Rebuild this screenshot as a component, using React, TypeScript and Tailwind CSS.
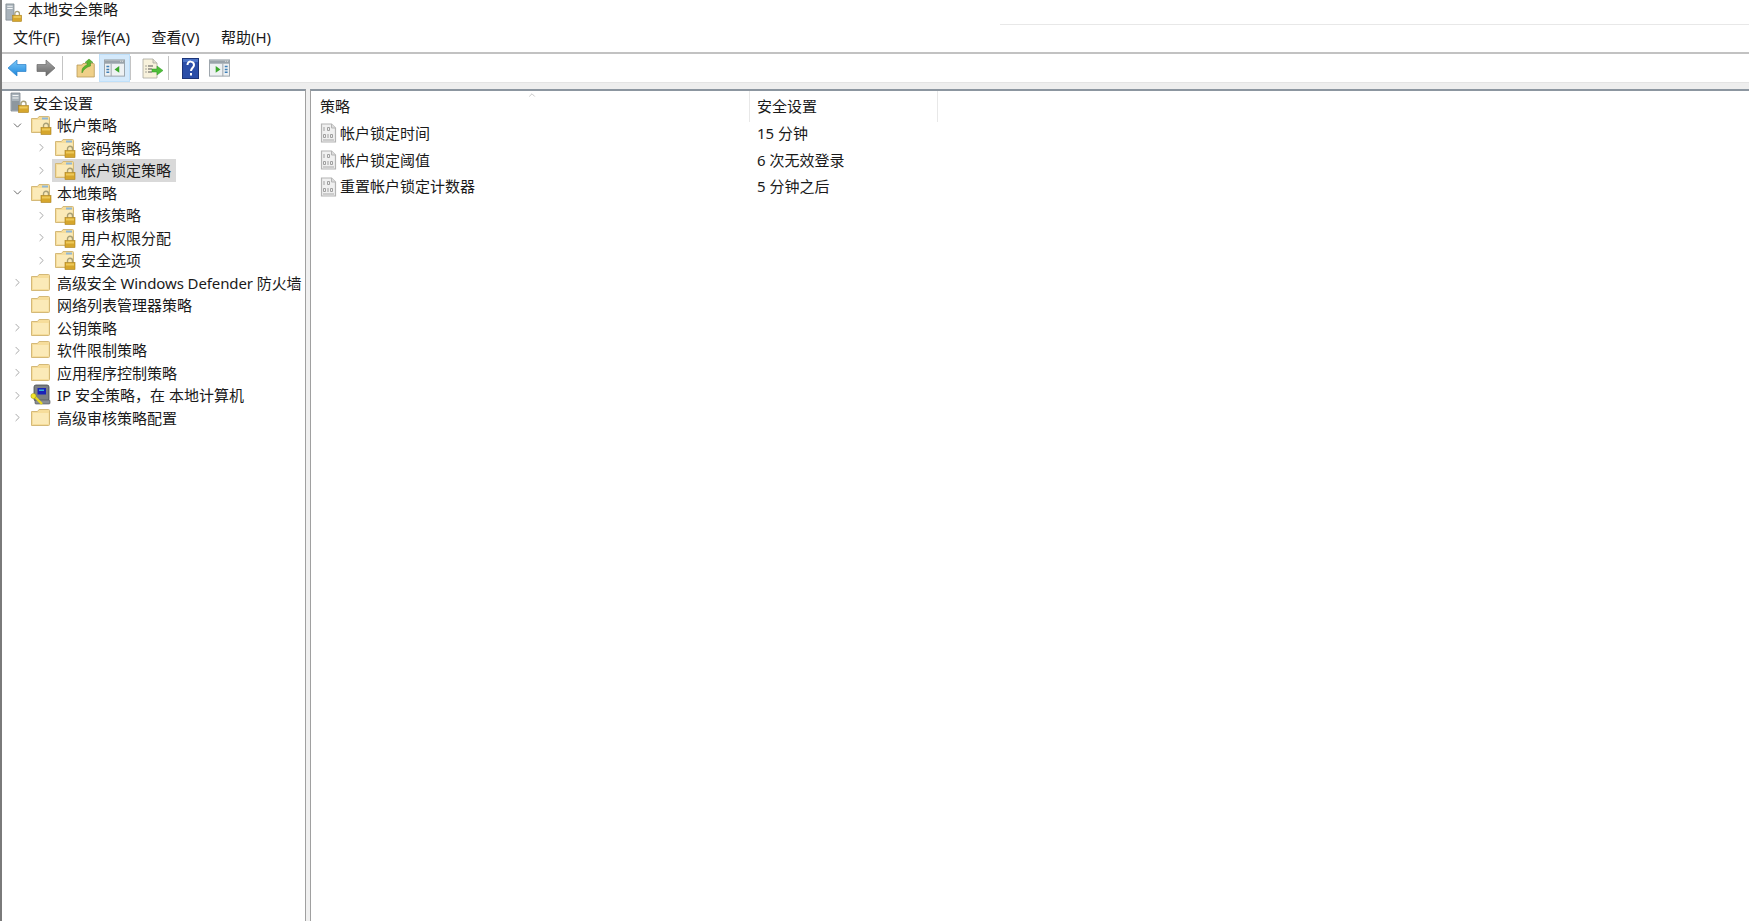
import { ChevronDown, ChevronRight, ChevronUp } from 'lucide-react';

type TreeRow = { label: string; level: number; arrow?: 'open' | 'closed'; icon: 'lock' | 'folder' | 'ip'; selected?: boolean };

const treeRows: TreeRow[] = [
  { label: '帐户策略', level: 0, arrow: 'open', icon: 'lock' },
  { label: '密码策略', level: 1, arrow: 'closed', icon: 'lock' },
  { label: '帐户锁定策略', level: 1, arrow: 'closed', icon: 'lock', selected: true },
  { label: '本地策略', level: 0, arrow: 'open', icon: 'lock' },
  { label: '审核策略', level: 1, arrow: 'closed', icon: 'lock' },
  { label: '用户权限分配', level: 1, arrow: 'closed', icon: 'lock' },
  { label: '安全选项', level: 1, arrow: 'closed', icon: 'lock' },
  { label: '高级安全 Windows Defender 防火墙', level: 0, arrow: 'closed', icon: 'folder' },
  { label: '网络列表管理器策略', level: 0, icon: 'folder' },
  { label: '公钥策略', level: 0, arrow: 'closed', icon: 'folder' },
  { label: '软件限制策略', level: 0, arrow: 'closed', icon: 'folder' },
  { label: '应用程序控制策略', level: 0, arrow: 'closed', icon: 'folder' },
  { label: 'IP 安全策略，在 本地计算机', level: 0, arrow: 'closed', icon: 'ip' },
  { label: '高级审核策略配置', level: 0, arrow: 'closed', icon: 'folder' },
];

const policies = [
  { name: '帐户锁定时间', value: '15 分钟' },
  { name: '帐户锁定阈值', value: '6 次无效登录' },
  { name: '重置帐户锁定计数器', value: '5 分钟之后' },
];

function Padlock({ x, y }: { x: number; y: number }) {
  return (
    <g transform={`translate(${x} ${y})`}>
      <path d="M2.500 5V3.200a2.500 2.500 0 0 1 5 0V5" fill="none" stroke="#a8a078" strokeWidth="1.400" />
      <rect x="0" y="5" width="10" height="7" fill="#d6a62c" stroke="#a87f1c" strokeWidth="0.600" />
      <rect x="1" y="6" width="8" height="2" fill="#edc95a" />
    </g>
  );
}

function FolderIcon({ lock }: { lock?: boolean }) {
  return (
    <svg width="22" height="20" viewBox="0 0 22 20" className="shrink-0">
      <path d="M1.500 3.500h6l1.500-2h9.500a1 1 0 0 1 1 1v14a1 1 0 0 1-1 1H1.500z" fill="#f6dd9b" stroke="#d4b978" strokeWidth="1" />
      <path d="M3 5h15.500v11H3z" fill="#fbeab8" />
      {lock && <rect x="12" y="2.500" width="6" height="2" fill="#8fb8d8" />}
      {lock && <Padlock x={11} y={7.5} />}
    </svg>
  );
}

function ServerLock() {
  return (
    <svg width="20" height="21" viewBox="0 0 20 21" className="shrink-0">
      <path d="M1 1h9v18H1z" fill="#a9b3bb" stroke="#7d868d" strokeWidth="0.800" />
      <path d="M2.500 3.500h6M2.500 6h6" stroke="#f3f5f6" strokeWidth="1.200" />
      <path d="M2 9h7v9H2z" fill="#8d979f" />
      <Padlock x={8.5} y={8.5} />
    </svg>
  );
}

function IpIcon() {
  return (
    <svg width="22" height="22" viewBox="0 0 22 22" className="shrink-0">
      <rect x="4" y="1" width="15" height="16" rx="2" fill="#7c8084" stroke="#45494c" strokeWidth="0.800" />
      <rect x="7.500" y="4" width="8.500" height="6.500" fill="#1a22b8" />
      <rect x="9" y="5.500" width="5" height="1.500" fill="#35b0d8" />
      <rect x="5" y="16" width="15" height="4" rx="1" fill="#8a8f93" stroke="#4b4f52" strokeWidth="0.600" />
      <path d="M4 12l8 8" stroke="#e8d81c" strokeWidth="2.400" />
      <circle cx="3.500" cy="12" r="2.600" fill="#f3e52a" stroke="#9a8f10" strokeWidth="0.500" />
    </svg>
  );
}

function PolicyIcon() {
  return (
    <svg width="17" height="20" viewBox="0 0 17 20" className="shrink-0">
      <path d="M1.500 1h10l4 4v14h-14z" fill="#f0f0f0" stroke="#b4b4b4" strokeWidth="1.200" />
      <path d="M11.500 1v4h4" fill="#dddddd" stroke="#b4b4b4" strokeWidth="1" />
      <path d="M4 4v4M7.500 4.500h2v3h-2zM3.500 11.500h2v3h-2zM8 11v4M10.500 11.500h2v3h-2z" fill="none" stroke="#a0a0a0" strokeWidth="1" />
      <path d="M3 17h11" stroke="#c0c0c0" strokeWidth="1.500" />
    </svg>
  );
}

function ArrowIcon({ dir, gray }: { dir: 'left' | 'right'; gray?: boolean }) {
  const id = gray ? 'arrowGray' : 'arrowBlue';
  return (
    <svg width="20" height="18" viewBox="0 0 20 18" className={dir === 'right' ? 'shrink-0 -scale-x-100' : 'shrink-0'}>
      <defs>
        <linearGradient id={id} x1="0" y1="0" x2="0" y2="1">
          <stop offset="0" stopColor={gray ? '#a8a8a8' : '#7cc8f8'} />
          <stop offset="1" stopColor={gray ? '#666666' : '#1c86dc'} />
        </linearGradient>
      </defs>
      <path d="M1 9l9-8v4.500h9v7h-9V17z" fill={`url(#${id})`} stroke={gray ? '#6a6a6a' : '#2a7fc8'} strokeWidth="0.700" />
    </svg>
  );
}

function UpFolderIcon() {
  return (
    <svg width="19" height="20" viewBox="0 0 19 20" className="shrink-0">
      <path d="M1 7h5l1-1.500h10.500a.8.8 0 0 1 .8.800V19H1z" fill="#efd089" stroke="#b99a58" strokeWidth="0.800" />
      <path d="M6 15c-.5-4 1-6.500 5-8V4.500h-2L13 1l4 3.500h-2.500V8c-4 1-6.500 3-8.500 7z" fill="#5bb52f" stroke="#3b8c1e" strokeWidth="0.500" />
    </svg>
  );
}

function PaneIcon({ flip }: { flip?: boolean }) {
  return (
    <svg width="21" height="18" viewBox="0 0 22 18" className="shrink-0">
      <rect x="0.500" y="0.500" width="21" height="17" fill="#eef1f3" stroke="#9aa3aa" />
      <rect x="1" y="1" width="20" height="3.500" fill="#9aa3aa" />
      <path d="M17 2h1M19 2h1" stroke="#e8e8e8" />
      {flip ? (
        <>
          <path d="M14.500 4.500v13" stroke="#9aa3aa" />
          <path d="M16.500 7.500h3M16.500 10.500h3M16.500 13.500h3" stroke="#3f80b8" strokeWidth="1.500" />
          <path d="M7 7l5 3.500-5 3.500z" fill="#3ba82c" />
        </>
      ) : (
        <>
          <path d="M7.500 4.500v13" stroke="#9aa3aa" />
          <path d="M2.500 7.500h3M2.500 10.500h3M2.500 13.500h3" stroke="#3f80b8" strokeWidth="1.500" />
          <path d="M16 7l-5 3.500 5 3.500z" fill="#3ba82c" />
        </>
      )}
    </svg>
  );
}

function ExportIcon() {
  return (
    <svg width="22" height="21" viewBox="0 0 22 21" className="shrink-0">
      <path d="M1 1h10l4 4v15H1z" fill="#f8f2dc" stroke="#a8a8a0" strokeWidth="0.800" />
      <path d="M11 1v4h4" fill="#e4e0d0" stroke="#a8a8a0" strokeWidth="0.800" />
      <path d="M3.500 8h1M6 8h5M3.500 11h1M6 11h4M3.500 14h1M6 14h4" stroke="#555555" strokeWidth="1" />
      <path d="M10 11h5V8l6 4.500-6 4.500v-3h-5z" fill="#4fbf3a" stroke="#2f9a24" strokeWidth="0.500" />
    </svg>
  );
}

function HelpIcon() {
  return (
    <svg width="17" height="21" viewBox="0 0 17 21" className="shrink-0">
      <rect x="0.500" y="0.500" width="16" height="20" fill="#2b4ea8" stroke="#1c3478" />
      <path d="M1 1h15v3H1z" fill="#4c74c8" />
      <path d="M5.500 7c0-5 6.500-4 6.500 0 0 2.500-3 3-3 6" fill="none" stroke="#ffffff" strokeWidth="2" />
      <rect x="8" y="15" width="2" height="2.500" fill="#ffffff" />
    </svg>
  );
}

function Sep() {
  return <div className="h-[24px] w-px bg-[#c4c4c4] shrink-0" />;
}

export default function App() {
  return (
    <div
      className="h-[921px] w-full overflow-hidden bg-white text-[15px] text-[#1a1a1a] flex flex-col border-l-2 border-[#7a7a7a]"
      style={{ fontFamily: '"Noto Sans", "Noto Sans CJK SC", sans-serif' }}
    >
      {/* title */}
      <div className="relative h-[24px] shrink-0 flex items-center gap-[5px] pl-[3px]">
        <svg width="18" height="19" viewBox="0 0 20 21" className="shrink-0">
          <path d="M1 1h9v18H1z" fill="#a9b3bb" stroke="#7d868d" strokeWidth="0.800" />
          <path d="M2.500 3.500h6M2.500 6h6" stroke="#f3f5f6" strokeWidth="1.200" />
          <Padlock x={8.5} y={8.5} />
        </svg>
        <span className="leading-none -mt-[6px]">本地安全策略</span>
        <div className="absolute left-[998px] right-0 top-[24px] h-px bg-[#e8e8e8]" />
      </div>

      {/* menu */}
      <div className="h-[30px] shrink-0 flex items-center gap-[21.5px] pl-[11px] pb-[1px] border-b-2 border-[#c2c2c2]">
        <span>文件(F)</span>
        <span>操作(A)</span>
        <span>查看(V)</span>
        <span>帮助(H)</span>
      </div>

      {/* toolbar */}
      <div className="h-[28px] shrink-0 flex items-center pl-[5px]">
        <ArrowIcon dir="left" />
        <div className="w-[9px]" />
        <ArrowIcon dir="right" gray />
        <div className="w-[6px]" />
        <Sep />
        <div className="w-[13px]" />
        <UpFolderIcon />
        <div className="w-[4px]" />
        <div className="h-[28px] w-[31px] flex items-center justify-center bg-[#d4e9fb] border border-[#bfe0fa]">
          <PaneIcon />
        </div>
        <Sep />
        <div className="w-[11px]" />
        <ExportIcon />
        <div className="w-[4px]" />
        <Sep />
        <div className="w-[13px]" />
        <HelpIcon />
        <div className="w-[10px]" />
        <PaneIcon flip />
      </div>

      {/* strip above the panes */}
      <div className="h-[7px] shrink-0 bg-[#eeeeee] border-t border-[#e4e4e4]" />

      {/* panes */}
      <div className="flex-1 min-h-0 flex bg-[#f0f0f0] gap-[4px]">
        <div className="w-[304px] shrink-0 bg-white border-t-2 border-r border-t-[#8c96a0] border-r-[#a0a0a0] pt-[0.5px]">
          <div className="h-[22.5px] flex items-center gap-[3px] pl-[8px]">
            <ServerLock />
            <span className="whitespace-nowrap">安全设置</span>
          </div>
          {treeRows.map((row) => (
            <div key={row.label} className={row.level === 1 ? 'h-[22.5px] flex items-center pl-[31px]' : 'h-[22.5px] flex items-center pl-[7px]'}>
              <div className="w-[16px] shrink-0 flex justify-center mr-[5px]">
                {row.arrow === 'open' && <ChevronDown size={13} strokeWidth={1.6} color="#555555" />}
                {row.arrow === 'closed' && <ChevronRight size={13} strokeWidth={1.6} color="#9a9a9a" />}
              </div>
              <div className={row.selected ? 'flex items-center h-[23px] bg-[#d9d9d9] -ml-[2px] pl-[2px] pr-[5px] gap-[5px]' : 'flex items-center gap-[5px]'}>
                {row.icon === 'ip' ? <IpIcon /> : <FolderIcon lock={row.icon === 'lock'} />}
                <span className={row.label.includes('Windows') ? 'whitespace-nowrap tracking-[-0.1px]' : 'whitespace-nowrap'}>{row.label}</span>
              </div>
            </div>
          ))}
        </div>

        <div className="relative flex-1 bg-white border-t-2 border-l border-t-[#8c96a0] border-l-[#a0a0a0]">
          <div className="absolute left-[216px] -top-[1px]">
            <ChevronUp size={10} strokeWidth={1.5} color="#a8a8a8" />
          </div>
          <div className="flex h-[31px]">
            <div className="w-[439px] flex items-center pl-[9px] border-r border-[#e8e8e8]">策略</div>
            <div className="w-[188px] flex items-center pl-[7px] border-r border-[#e8e8e8]">安全设置</div>
          </div>
          <div className="-mt-[2px]">
            {policies.map((p) => (
              <div key={p.name} className="flex h-[26.7px] items-center">
                <div className="w-[439px] flex items-center gap-[3px] pl-[9px]">
                  <PolicyIcon />
                  <span>{p.name}</span>
                </div>
                <div className="pl-[7px]">{p.value}</div>
              </div>
            ))}
          </div>
        </div>
      </div>
    </div>
  );
}
